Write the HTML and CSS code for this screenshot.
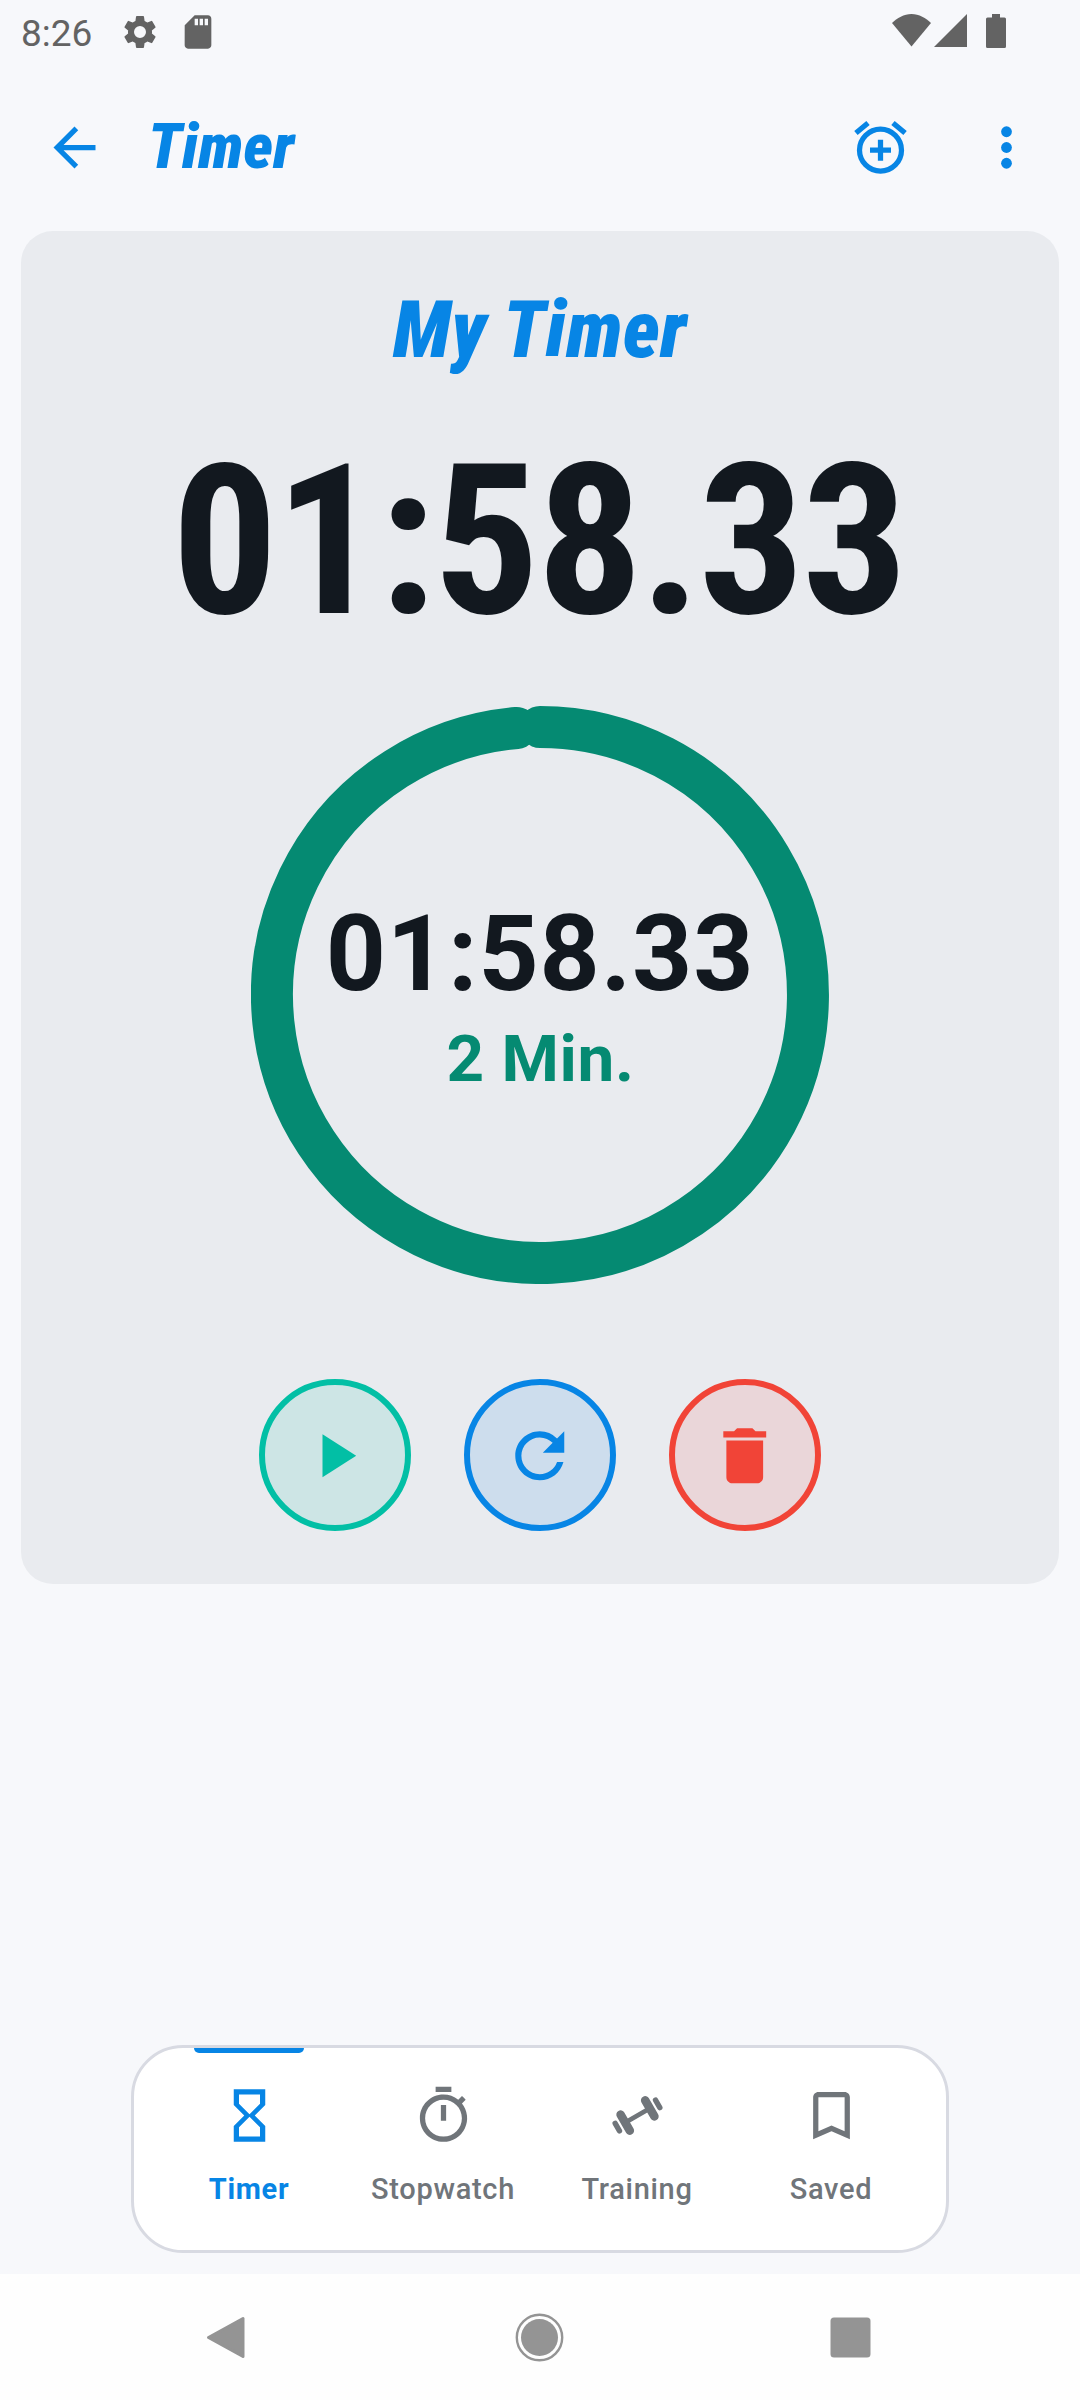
FILE: index.html
```html
<!DOCTYPE html>
<html lang="en">
<head>
<meta charset="utf-8">
<title>Timer</title>
<link rel="stylesheet" href="styles.css">
</head>
<body>
<div class="screen">
  <header class="status-bar">
    <span class="clock">8:26</span>
    <svg class="status-icon gear" viewBox="0 0 24 24"><path d="M19.14 12.94c.04-.3.06-.61.06-.94s-.02-.64-.07-.94l2.03-1.58a.49.49 0 0 0 .12-.61l-1.92-3.32a.49.49 0 0 0-.59-.22l-2.39.96a7 7 0 0 0-1.62-.94l-.36-2.54a.48.48 0 0 0-.48-.41h-3.84a.48.48 0 0 0-.47.41l-.36 2.54c-.59.24-1.13.57-1.62.94l-2.39-.96a.48.48 0 0 0-.59.22L2.74 8.87a.48.48 0 0 0 .12.61l2.03 1.58c-.05.3-.09.63-.09.94s.02.64.07.94l-2.03 1.58a.49.49 0 0 0-.12.61l1.92 3.32c.12.22.37.29.59.22l2.39-.96c.5.38 1.03.7 1.62.94l.36 2.54c.05.24.24.41.48.41h3.84c.24 0 .44-.17.47-.41l.36-2.54a6.800 6.800 0 0 0 1.62-.94l2.39.96c.22.08.47 0 .59-.22l1.92-3.32a.48.48 0 0 0-.12-.61zM12 15.600a3.600 3.600 0 1 1 0-7.200 3.600 3.600 0 0 1 0 7.200z"/></svg>
    <svg class="status-icon sd" viewBox="0 0 24 24"><path d="M18 2h-8L4.020 8 4 20c0 1.100.9 2 2 2h12c1.100 0 2-.9 2-2V4c0-1.100-.9-2-2-2zm-6 6h-2V4h2v4zm3 0h-2V4h2v4zm3 0h-2V4h2v4z"/></svg>
    <span class="spacer"></span>
    <svg class="wifi" viewBox="0 0 39 33"><path d="M19.500 32.500 0 9C5 4 12 0 19.500 0S34 4 39 9z"/></svg>
    <svg class="signal" viewBox="0 0 33 33"><path d="M33 0v33H0z"/></svg>
    <svg class="battery" viewBox="0 0 20 34"><path d="M6 0h8v3.500h4.500Q20 3.500 20 5v27.500Q20 34 18.500 34h-17Q0 34 0 32.500V5q0-1.500 1.500-1.500H6z"/></svg>
  </header>

  <div class="app-bar">
    <svg class="bar-icon" viewBox="0 0 24 24"><path d="M20 11H7.830l5.590-5.590L12 4l-8 8 8 8 1.410-1.410L7.830 13H20z"/></svg>
    <h1 class="app-title">Timer</h1>
    <span class="spacer"></span>
    <svg class="bar-icon" viewBox="0 0 24 24"><path d="M7.880 3.390 6.600 1.860 2 5.710l1.290 1.530zM22 5.720l-4.600-3.860-1.290 1.530 4.600 3.860zM12 4a9 9 0 1 0 0 18 9 9 0 0 0 0-18zm0 16a7 7 0 1 1 0-14 7 7 0 0 1 0 14zm1-11h-2v3H8v2h3v3h2v-3h3v-2h-3z"/></svg>
    <svg class="bar-icon more" viewBox="0 0 24 24"><circle cx="12" cy="6" r="2.050"/><circle cx="12" cy="12" r="2.050"/><circle cx="12" cy="18" r="2.050"/></svg>
  </div>

  <main class="card">
    <h2 class="timer-name">My Timer</h2>
    <div class="big-time">01:58.33</div>
    <div class="dial">
      <svg class="ring" viewBox="0 0 578 578"><path d="M289 21A268 268 0 1 1 265.600 22.020"/></svg>
      <div class="dial-text">
        <div class="dial-time">01:58.33</div>
        <div class="dial-total">2 Min.</div>
      </div>
    </div>
    <div class="actions">
      <button class="action play"><svg viewBox="0 0 24 24"><path d="M8 5v14l11-7z"/></svg></button>
      <button class="action reset"><svg viewBox="0 0 24 24"><path d="M17.650 6.350A7.958 7.958 0 0 0 12 4c-4.420 0-7.990 3.580-7.990 8s3.570 8 7.990 8c3.730 0 6.840-2.550 7.730-6h-2.080A5.990 5.990 0 0 1 12 18c-3.310 0-6-2.690-6-6s2.690-6 6-6c1.660 0 3.140.69 4.220 1.780L13 11h7V4z"/></svg></button>
      <button class="action delete"><svg viewBox="0 0 24 24"><path d="M6 19c0 1.100.9 2 2 2h8c1.100 0 2-.9 2-2V7H6zM19 4h-3.500l-1-1h-5l-1 1H5v2h14z"/></svg></button>
    </div>
  </main>

  <nav class="tabs">
    <a class="tab active"><svg viewBox="0 0 24 24"><path d="M6 2v6h.010L6 8.010 10 12l-4 4 .010.010H6V22h12v-5.990h-.010L18 16l-4-4 4-3.990-.010-.010H18V2zm10 14.500V20H8v-3.500l4-4zm-4-5-4-4V4h8v3.500z"/></svg><span>Timer</span></a>
    <a class="tab"><svg viewBox="0 0 24 24"><path d="M15 1H9v2h6zm-4 13h2V8h-2zm8.030-6.610 1.420-1.420c-.43-.51-.9-.99-1.410-1.410l-1.420 1.420A8.962 8.962 0 0 0 12 4c-4.970 0-9 4.030-9 9s4.020 9 9 9a8.994 8.994 0 0 0 7.030-14.610zM12 20c-3.870 0-7-3.130-7-7s3.130-7 7-7 7 3.130 7 7-3.130 7-7 7z"/></svg><span>Stopwatch</span></a>
    <a class="tab"><svg viewBox="0 0 63 63"><g class="dumbbell" transform="rotate(-30 31.500 31.500)"><path stroke-width="4.800" d="M17 31.500h29"/><path stroke-width="8.600" d="M17.300 22.300v18.400M45.700 22.300v18.400"/><path stroke-width="5.400" d="M8.200 27.200v8.600M54.800 27.200v8.600"/></g></svg><span>Training</span></a>
    <a class="tab"><svg viewBox="0 0 24 24"><path d="M17 3H7c-1.100 0-1.990.9-1.990 2L5 21l7-3 7 3V5c0-1.100-.9-2-2-2zm0 15-5-2.180L7 18V5h10z"/></svg><span>Saved</span></a>
  </nav>

  <footer class="system-nav">
    <svg viewBox="0 0 63 63"><path class="round" d="M46 12.500v38L11.500 31.500z"/></svg>
    <svg viewBox="0 0 63 63"><circle class="outline" cx="31.500" cy="31.500" r="22.700"/><circle cx="31.500" cy="31.500" r="18.500"/></svg>
    <svg viewBox="0 0 63 63"><rect x="11.500" y="11.500" width="40" height="40" rx="3.500"/></svg>
  </footer>
</div>
</body>
</html>
```
FILE: styles.css
```css
* { box-sizing: border-box; margin: 0; padding: 0; }

body {
  width: 1080px;
  height: 2400px;
  overflow: hidden;
  background: #f7f8fb;
  font-family: Roboto, sans-serif;
}

svg { display: block; flex: none; fill: currentColor; }

.spacer { flex: 1; }

.screen {
  display: flex;
  flex-direction: column;
  height: 2400px;
}

/* Status bar */
.status-bar {
  display: flex;
  height: 63px;
  padding: 14px 74px 0 21px;
  color: #636363;
}

.clock { width: 99px; font-size: 37px; line-height: 39px; }
.status-icon { width: 40px; height: 40px; margin-top: -2px; }
.sd { margin-left: 18px; }
.wifi { width: 39px; height: 33px; }
.signal { width: 33px; height: 33px; margin-left: 3px; }
.battery { width: 20px; height: 34px; margin-left: 19px; }

/* App bar */
.app-bar {
  display: flex;
  align-items: center;
  height: 168px;
  padding: 0 42px 0 43px;
  color: #0785e5;
}

.bar-icon { width: 63px; height: 63px; }
.more { margin-left: 63px; }

.app-title {
  margin-left: 42px;
  font: italic 900 63px/74px Roboto, sans-serif;
  font-stretch: 75%;
  letter-spacing: 0.200px;
}

/* Timer card */
.card {
  display: flex;
  flex-direction: column;
  align-items: center;
  height: 1353px;
  margin: 0 21px;
  border-radius: 32px;
  background: #e9ebef;
}

.timer-name {
  margin-top: 53px;
  color: #0785e5;
  font: italic 900 78.750px/92px Roboto, sans-serif;
  font-stretch: 75%;
  letter-spacing: 0.400px;
}

.big-time {
  margin-top: 42px;
  padding-right: 3px;
  color: #12181f;
  font: 700 210px/246px Roboto, sans-serif;
  font-stretch: 75%;
  letter-spacing: -2.700px;
}

.dial {
  display: grid;
  width: 578px;
  height: 578px;
  margin-top: 42px;
}

.dial > * { grid-area: 1 / 1; }

.ring {
  width: 578px;
  height: 578px;
  fill: none;
  stroke: #058a72;
  stroke-width: 42;
  stroke-linecap: round;
}

.dial-text { padding-top: 187px; text-align: center; font-weight: 700; letter-spacing: 0.900px; }
.dial-time { color: #12181f; font-size: 105px; line-height: 123px; }
.dial-total { margin-top: 4px; padding-left: 1px; color: #058a72; font-size: 65.600px; line-height: 77px; letter-spacing: 0.600px; }

.actions {
  display: flex;
  gap: 53px;
  margin-top: 95px;
}

.action {
  display: grid;
  place-items: center;
  width: 152px;
  height: 152px;
  padding-top: 1px;
  border: 6px solid currentColor;
  border-radius: 50%;
}

.action svg { width: 73.500px; height: 73.500px; }
.play { color: #02bfa5; background: #cde5e5; }
.reset { color: #0785e5; background: #cddded; }
.delete { color: #f14437; background: #ead6d9; }

/* Bottom tabs */
.tabs {
  display: flex;
  width: 818px;
  height: 208px;
  margin: 461px auto 0;
  padding: 0 18px;
  border: 3px solid #d8dae2;
  border-radius: 52px;
  background: #fff;
}

.tab {
  position: relative;
  flex: 1;
  display: flex;
  flex-direction: column;
  align-items: center;
  padding-top: 36px;
  color: #70757a;
  font-size: 29px;
  font-weight: 500;
  letter-spacing: 0.700px;
}

.tab svg { width: 63px; height: 63px; }
.tab span { margin-top: 25px; line-height: 34px; }
.active { color: #0785e5; font-weight: 700; }

.active::before {
  content: "";
  position: absolute;
  top: 0;
  width: 110px;
  height: 5px;
  border-radius: 0 0 5px 5px;
  background: #0785e5;
}

.dumbbell { fill: none; stroke: currentColor; stroke-linecap: round; }

/* System navigation */
.system-nav {
  display: flex;
  justify-content: center;
  align-items: center;
  gap: 248px;
  height: 126px;
  margin-top: auto;
  padding-right: 1px;
  background: #fefefe;
  color: #949494;
}

.system-nav svg { width: 63px; height: 63px; }
.outline { fill: none; stroke: currentColor; stroke-width: 2.400; }
.round { stroke: currentColor; stroke-width: 3; stroke-linejoin: round; }
```
